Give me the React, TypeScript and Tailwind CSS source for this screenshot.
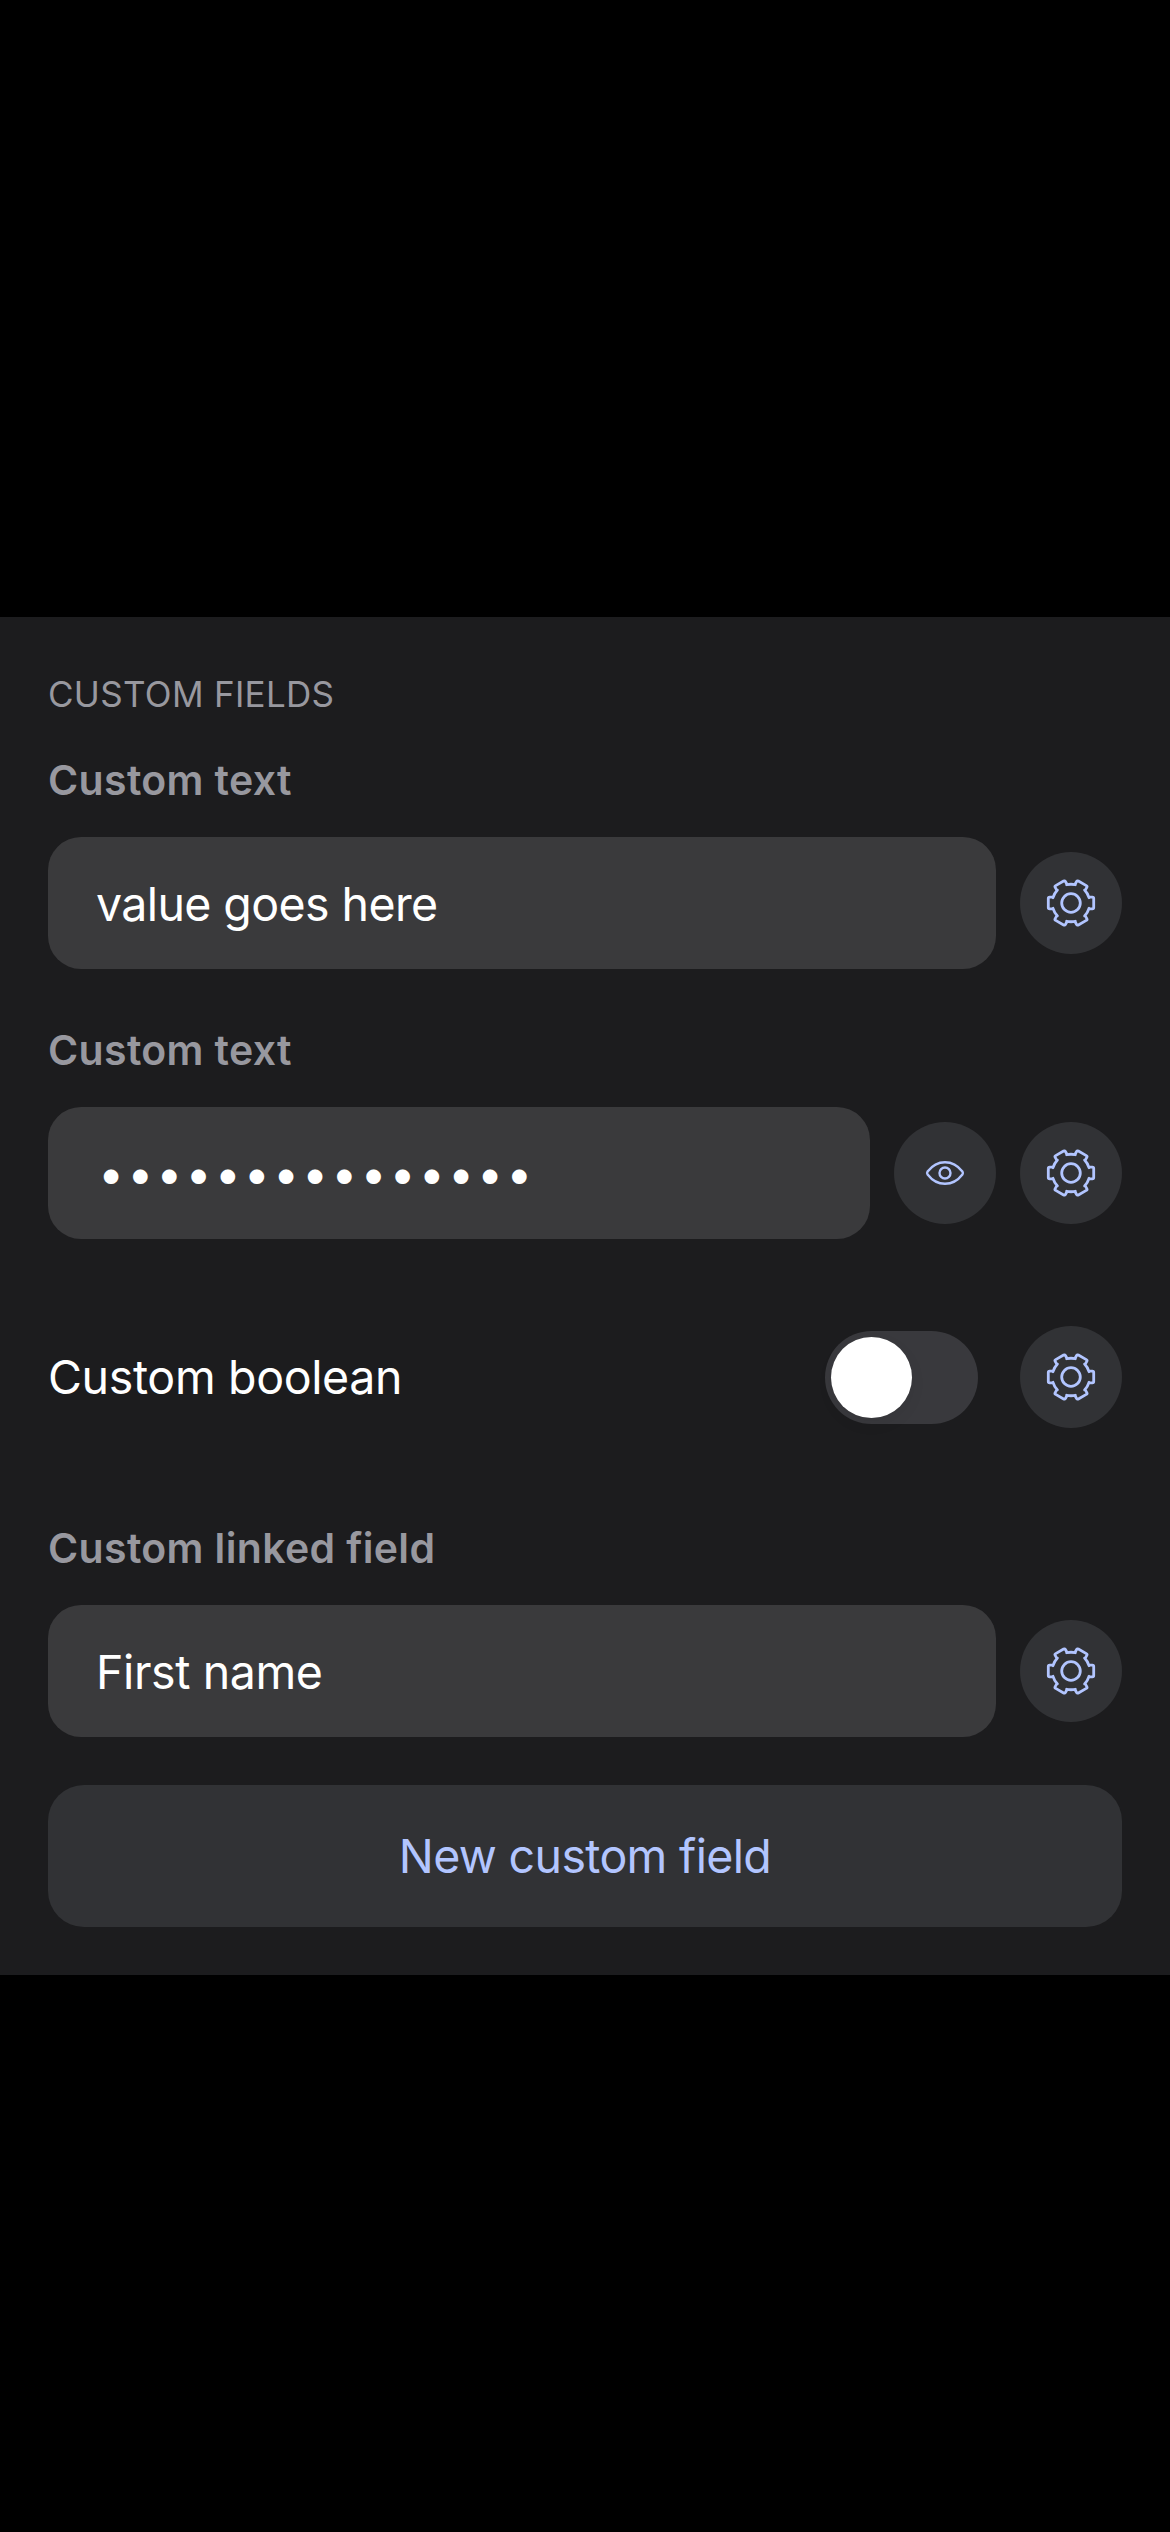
import type { ReactNode } from "react";

const DEG = Math.PI / 180;

function turn(x: number, y: number, angle: number) {
  const c = Math.cos(angle * DEG);
  const s = Math.sin(angle * DEG);
  return `${(x * c - y * s).toFixed(2)} ${(x * s + y * c).toFixed(2)}`;
}

// Outline of a six-toothed cog centred on the origin.
const cogPath =
  [0, 60, 120, 180, 240, 300]
    .map((a, i) =>
      [
        `${i === 0 ? "M" : "A18.8 18.8 0 0 1 "}${turn(18, -5.3, a)}`,
        `L${turn(18.6, -5.9, a)}`,
        `L${turn(21.4, -5.9, a)}`,
        `Q${turn(22.7, -5.9, a)} ${turn(22.7, -4.6, a)}`,
        `L${turn(22.7, 4.6, a)}`,
        `Q${turn(22.7, 5.9, a)} ${turn(21.4, 5.9, a)}`,
        `L${turn(18.6, 5.9, a)}`,
        `L${turn(18, 5.3, a)}`,
      ].join(" "),
    )
    .join(" ") + ` A18.8 18.8 0 0 1 ${turn(18, -5.3, 0)} Z`;

function Cog() {
  return (
    <svg className="size-[50px]" viewBox="-25 -25 50 50" fill="none" stroke="#b2c5ff" strokeWidth="2.8" strokeLinejoin="round">
      <path d={cogPath} />
      <circle r="9.3" />
    </svg>
  );
}

function Eye() {
  return (
    <svg className="h-[30px] w-[42px]" viewBox="-21 -15 42 30" fill="none" stroke="#b2c5ff" strokeWidth="2.4" strokeLinejoin="round">
      <path d="M-17.4 -1.5C-13.5 -6.6 -7.4 -10.8 0 -10.8S13.5 -6.6 17.4 -1.5Q18.4 0 17.4 1.5C13.5 6.6 7.4 10.8 0 10.8S-13.5 6.6 -17.4 1.5Q-18.4 0 -17.4 -1.5Z" />
      <circle r="5.5" />
    </svg>
  );
}

function RoundButton({ label, children }: { label: string; children: ReactNode }) {
  return (
    <button aria-label={label} className="flex size-[102px] shrink-0 items-center justify-center rounded-full bg-[#313235]">
      {children}
    </button>
  );
}

function Label({ children }: { children: ReactNode }) {
  return (
    <div className="mb-[33px] h-12 text-[41px] leading-[48px] font-semibold tracking-[0.35px] text-[#98989f]">{children}</div>
  );
}

function Value({ children }: { children: ReactNode }) {
  return (
    <div className="flex h-[132px] flex-1 items-center rounded-[33px] bg-[#3a3a3c] px-12 pt-0.5 text-[46.5px] leading-none whitespace-nowrap text-white">
      {children}
    </div>
  );
}

export default function App() {
  return (
    <div className="flex h-[2532px] w-[1170px] flex-col bg-black pt-[617px] font-['Inter',sans-serif]">
      <section className="flex h-[1358px] flex-col bg-[#1c1c1e] px-12 pt-[53px]">
        <h2 className="mb-[38px] h-12 text-[35px] leading-[48px] tracking-[0.3px] text-[#98989f]">CUSTOM FIELDS</h2>

        <Label>Custom text</Label>
        <div className="mb-[57px] flex items-center gap-6">
          <Value>
            <span className="tracking-[-0.6px]">value goes here</span>
          </Value>
          <RoundButton label="Field settings"><Cog /></RoundButton>
        </div>

        <Label>Custom text</Label>
        <div className="mb-[87px] flex items-center gap-6">
          <Value>
            <span className="mb-0.5 ml-0.5 tracking-[3px]">•••••••••••••••</span>
          </Value>
          <RoundButton label="Show value"><Eye /></RoundButton>
          <RoundButton label="Field settings"><Cog /></RoundButton>
        </div>

        <div className="mb-24 flex items-center">
          <span className="flex-1 text-[46.5px] leading-none tracking-[-0.35px] text-white">Custom boolean</span>
          <div className="mr-[42px] flex h-[93px] w-[153px] items-center rounded-full bg-[#39393d] px-1.5">
            <div className="size-[81px] rounded-full bg-white shadow-[0_6px_16px_rgba(0,0,0,0.06)]" />
          </div>
          <RoundButton label="Field settings"><Cog /></RoundButton>
        </div>

        <Label>Custom linked field</Label>
        <div className="mb-12 flex items-center gap-6">
          <Value>
            <span className="tracking-[-0.4px]">First name</span>
          </Value>
          <RoundButton label="Field settings"><Cog /></RoundButton>
        </div>

        <button className="h-[142px] rounded-[36px] bg-[#313235] text-[46.5px] leading-none tracking-[-0.65px] text-[#b2c5ff]">
          New custom field
        </button>
      </section>
    </div>
  );
}
